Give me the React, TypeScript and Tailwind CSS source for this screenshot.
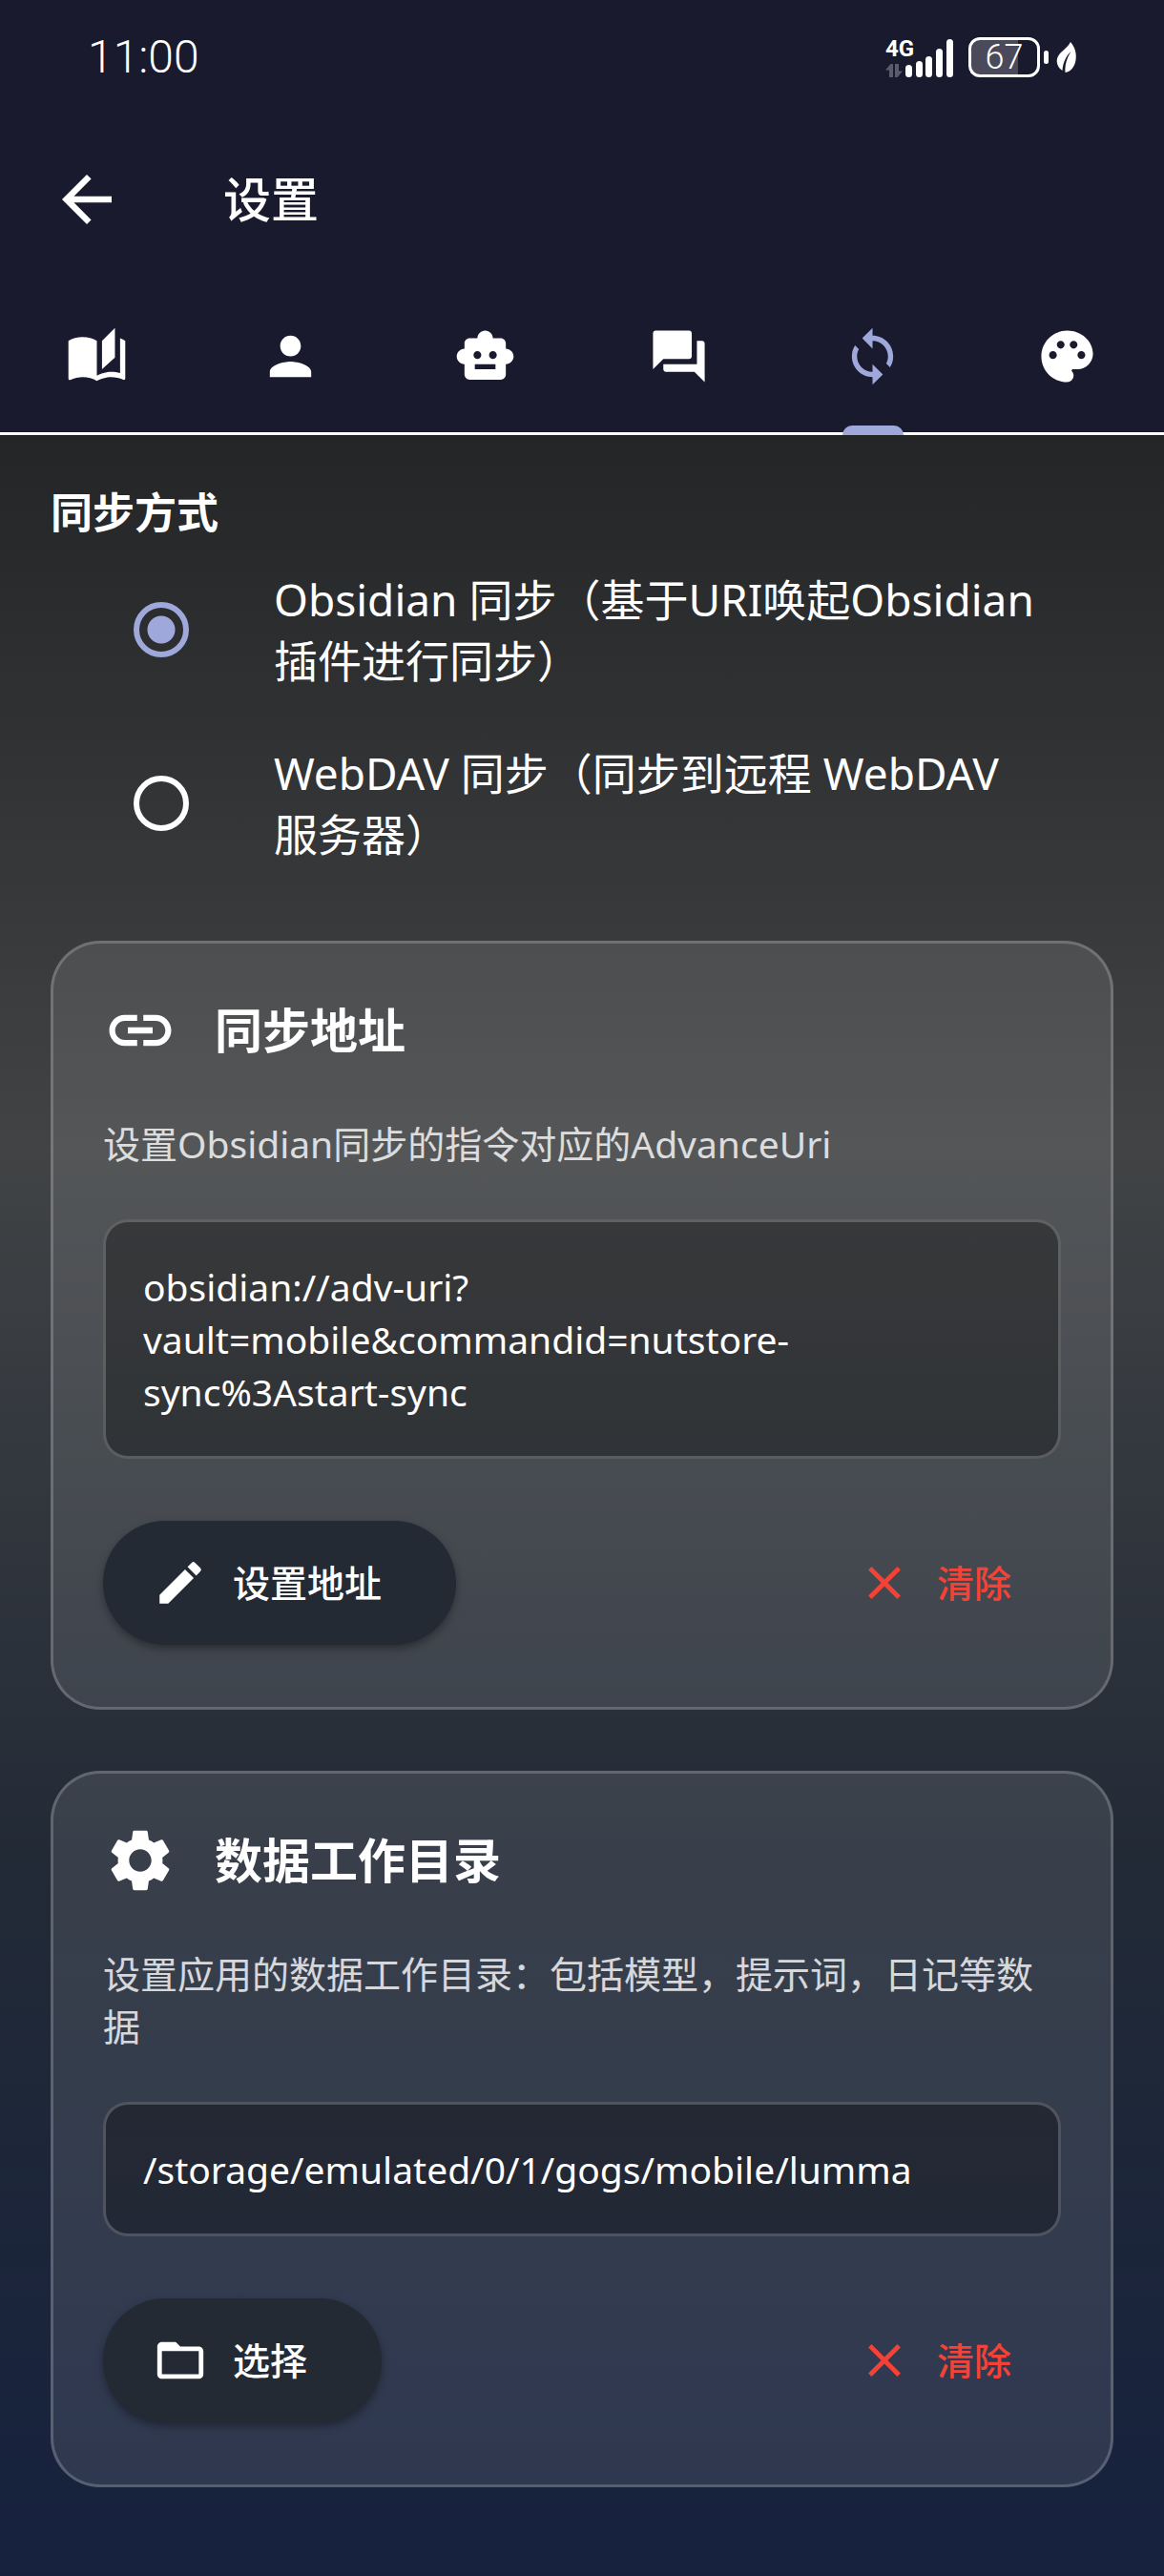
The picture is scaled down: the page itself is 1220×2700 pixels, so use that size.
import { useState } from "react";
import type { ReactNode } from "react";
import {
  MdArrowBack,
  MdAutoStories,
  MdPerson,
  MdSmartToy,
  MdForum,
  MdSync,
  MdPalette,
  MdLink,
  MdSettings,
  MdEdit,
  MdClose,
  MdFolderOpen,
} from "react-icons/md";

const tabs = [
  { label: "日记", Icon: MdAutoStories },
  { label: "用户", Icon: MdPerson },
  { label: "模型", Icon: MdSmartToy },
  { label: "提示词", Icon: MdForum },
  { label: "同步", Icon: MdSync },
  { label: "主题", Icon: MdPalette },
];

const methods = [
  { id: "obsidian", label: "Obsidian 同步（基于URI唤起Obsidian 插件进行同步）" },
  { id: "webdav", label: "WebDAV 同步（同步到远程 WebDAV 服务器）" },
];

function StatusBar() {
  return (
    <div className="flex h-[120px] items-center justify-between pr-[91px] pl-[92px]">
      <time className="font-['Roboto'] text-[48px] font-light">11:00</time>
      <div className="flex items-center gap-4">
        <div className="flex items-end">
          <div className="flex w-[21px] flex-col items-start">
            <span className="font-['Roboto'] text-[24px] leading-6 font-bold">4G</span>
            <svg viewBox="0 0 18 14" className="mt-1 h-3.5 w-[18px] fill-[#5b5b6c]">
              <path d="M0 6.5 5.5 0H8v14H4V6.5ZM10 0h4v7.5h4L12.500 14H10Z" />
            </svg>
          </div>
          <svg viewBox="0 0 50 40" className="h-10 w-[50px] fill-white">
            <rect x="0" y="27" width="7" height="13" rx="3.500" />
            <rect x="11" y="23" width="7" height="17" rx="3.500" />
            <rect x="21" y="18" width="7" height="22" rx="3.500" />
            <rect x="32" y="10" width="7" height="30" rx="3.500" />
            <rect x="43" y="0" width="7" height="40" rx="3.500" />
          </svg>
        </div>
        <div className="flex items-center gap-1">
          <div className="flex h-[42px] w-[75px] items-center justify-center rounded-xl border-3 border-white bg-linear-to-r from-[#4b4a5b] from-71% to-transparent to-71% font-['Roboto'] text-[36px] leading-9 font-light">
            67
          </div>
          <div className="h-3.5 w-[5px] rounded-full bg-white" />
          <svg viewBox="0 0 22 34" className="ml-1 h-[34px] w-[22px]">
            <path d="M15 1C20 7 21.500 13 20.500 20 19.500 27 15 32.500 9.500 33 9 25 11 18 15.500 11 10 16 7 23 6.500 31 2 28 0 23 1 18.500 3 11 11 9 15 1Z" fill="white" />
          </svg>
        </div>
      </div>
    </div>
  );
}

function Card({ icon, title, description, value, action, actionIcon }: {
  icon: ReactNode;
  title: string;
  description: string;
  value: string;
  action: string;
  actionIcon: ReactNode;
}) {
  return (
    <section className="rounded-[52px] border-3 border-white/20 bg-white/10 p-13">
      <div className="flex items-center gap-[39px] text-[78px]">
        {icon}
        <h2 className="text-[50px] leading-[78px] font-semibold">{title}</h2>
      </div>
      <p className="mt-13 text-[39px] leading-[55px] text-white/80">{description}</p>
      <div className="mt-13 rounded-[26px] border-3 border-white/20 bg-black/32 px-[39px] py-10 text-[39px] leading-[55px] break-words">
        {value}
      </div>
      <div className="mt-13 flex h-39 items-center justify-between">
        <button className="flex h-[130px] items-center gap-[26px] rounded-full bg-[#232a34] pr-[78px] pl-13 text-[39px] font-medium shadow-[0_4px_8px_rgba(0,0,0,0.35)]">
          <span className="text-[58px]">{actionIcon}</span>
          {action}
        </button>
        <button className="flex h-[130px] items-center gap-[26px] pr-13 pl-13 text-[39px] font-medium text-[#f44336]">
          <MdClose className="text-[58px]" />
          清除
        </button>
      </div>
    </section>
  );
}

export default function App() {
  const [tab, setTab] = useState(4);
  const [method, setMethod] = useState("obsidian");
  return (
    <div className="flex min-h-screen flex-col bg-[#1a1a2e] font-['Noto_Sans','Noto_Sans_CJK_SC',sans-serif] text-white">
      <header>
        <StatusBar />
        <div className="flex h-[178px] items-center pl-13">
          <button aria-label="返回" className="text-[78px]">
            <MdArrowBack />
          </button>
          <h1 className="ml-[104px] text-[50px] leading-[72px] font-medium">设置</h1>
        </div>
        <nav className="grid h-[158px] grid-cols-6 border-b-3 border-white">
          {tabs.map(({ label, Icon }, i) => (
            <button
              key={label}
              aria-label={label}
              onClick={() => setTab(i)}
              className={i === tab ? "relative flex items-center justify-center pb-1 text-[65px] text-[#9fa8da]" : "relative flex items-center justify-center pb-1 text-[65px]"}
            >
              <Icon />
              {i === tab && <span className="absolute -bottom-[3px] h-2.5 w-16 rounded-t-[10px] bg-[#9fa8da]" />}
            </button>
          ))}
        </nav>
      </header>
      <main className="flex grow flex-col bg-[linear-gradient(#232526,#414345,#222a36,#16213e)] px-[53px] pt-[49px] pb-[90px]">
        <fieldset>
          <legend className="text-[44px] leading-16 font-bold">同步方式</legend>
          {methods.map(({ id, label }) => (
            <label key={id} className="flex h-[182px] items-center gap-[89px] pr-16 pl-[87px]">
              <input
                type="radio"
                name="method"
                checked={method === id}
                onChange={() => setMethod(id)}
                className="size-[58px] shrink-0 appearance-none rounded-full border-6 border-white checked:border-[#9fa8da] checked:bg-[radial-gradient(circle,#9fa8da_14px,transparent_15px)]"
              />
              <span className="text-[46px] leading-16">{label}</span>
            </label>
          ))}
        </fieldset>
        <div className="mt-[53px] flex flex-col gap-16">
          <Card
            icon={<MdLink />}
            title="同步地址"
            description="设置Obsidian同步的指令对应的AdvanceUri"
            value="obsidian://adv-uri?vault=mobile&commandid=nutstore-sync%3Astart-sync"
            action="设置地址"
            actionIcon={<MdEdit />}
          />
          <Card
            icon={<MdSettings />}
            title="数据工作目录"
            description="设置应用的数据工作目录：包括模型，提示词，日记等数据"
            value="/storage/emulated/0/1/gogs/mobile/lumma"
            action="选择"
            actionIcon={<MdFolderOpen />}
          />
        </div>
      </main>
    </div>
  );
}
